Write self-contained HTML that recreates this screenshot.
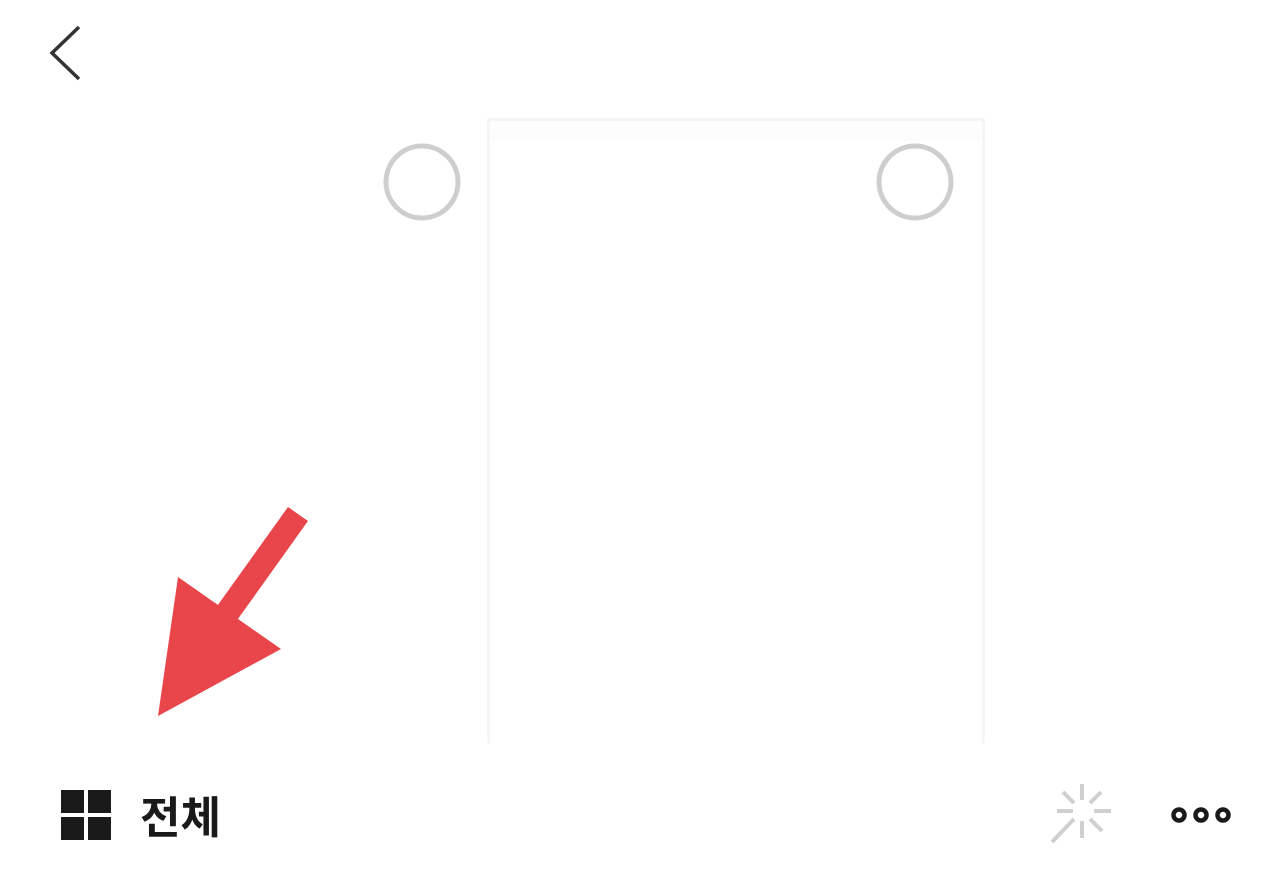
<!DOCTYPE html>
<html><head><meta charset="utf-8"><style>
html,body{margin:0;padding:0;width:1284px;height:871px;background:#fff;overflow:hidden;position:relative;font-family:"Liberation Sans","Noto Sans CJK KR",sans-serif}
.card{position:absolute;left:487px;top:118px;width:492px;height:622px;border:3px solid #f6f6f6;border-bottom:none;background:#fff}
.card:before{content:"";position:absolute;left:0;right:0;top:0;height:20px;background:#fdfdfd}
.sq{position:absolute;background:#1a1a1a;width:23px;height:23px}
.t{position:absolute;left:140px;top:784px;font-size:44px;font-weight:bold;color:#1a1a1a;font-family:"Noto Sans CJK KR",sans-serif;line-height:60px}
</style></head><body>
<svg style="position:absolute;left:0;top:0" width="1284" height="871">
<polyline points="79,27 52,53 79,79" fill="none" stroke="#333" stroke-width="3.5"/>
</svg>
<div class="card"></div>
<svg style="position:absolute;left:0;top:0" width="1284" height="871">
<circle cx="422" cy="182" r="36" fill="none" stroke="#cecece" stroke-width="5"/>
<circle cx="915" cy="182" r="36" fill="none" stroke="#cecece" stroke-width="5"/>
<polygon points="288,507 308,521 230,630 210,616" fill="#e8464b"/>
<polygon points="178,577 281,649 158,716" fill="#e8464b"/>
<g stroke="#cfcfcf" stroke-width="4">
<line x1="1082" y1="784" x2="1082" y2="800"/>
<line x1="1082" y1="821" x2="1082" y2="838"/>
<line x1="1057" y1="811" x2="1073" y2="811"/>
<line x1="1094" y1="811" x2="1111" y2="811"/>
<line x1="1063" y1="792" x2="1074" y2="803"/>
<line x1="1101" y1="792" x2="1090" y2="803"/>
<line x1="1090" y1="819" x2="1102" y2="831"/>
<line x1="1074" y1="819" x2="1052" y2="842"/>
</g>
<g fill="none" stroke="#1a1a1a" stroke-width="4.5">
<circle cx="1179" cy="815" r="5.5"/><circle cx="1201" cy="815" r="5.5"/><circle cx="1223" cy="815" r="5.5"/>
</g>
</svg>
<div class="sq" style="left:61px;top:790px"></div>
<div class="sq" style="left:88px;top:790px"></div>
<div class="sq" style="left:61px;top:817px"></div>
<div class="sq" style="left:88px;top:817px"></div>
<div class="t">전체</div>
</body></html>
